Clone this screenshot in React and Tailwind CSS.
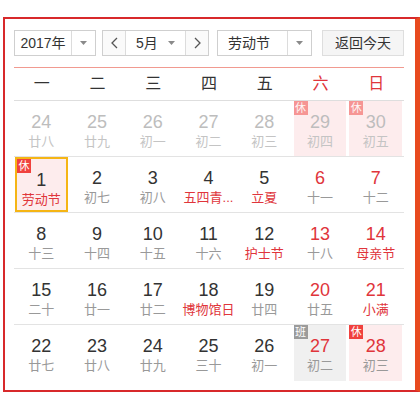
import React from 'react';

const weekdays = [
  { t: '一' }, { t: '二' }, { t: '三' }, { t: '四' }, { t: '五' },
  { t: '六', red: true }, { t: '日', red: true },
];

// n: day, l: lunar, out: not this month, rn: red number, rl: red lunar,
// tag: 休/班 badge, sel: selected
const weeks = [
  [
    { n: 24, l: '廿八', out: true },
    { n: 25, l: '廿九', out: true },
    { n: 26, l: '初一', out: true },
    { n: 27, l: '初二', out: true },
    { n: 28, l: '初三', out: true },
    { n: 29, l: '初四', out: true, tag: '休' },
    { n: 30, l: '初五', out: true, tag: '休' },
  ],
  [
    { n: 1, l: '劳动节', rl: true, tag: '休', sel: true },
    { n: 2, l: '初七' },
    { n: 3, l: '初八' },
    { n: 4, l: '五四青...', rl: true },
    { n: 5, l: '立夏', rl: true },
    { n: 6, l: '十一', rn: true },
    { n: 7, l: '十二', rn: true },
  ],
  [
    { n: 8, l: '十三' },
    { n: 9, l: '十四' },
    { n: 10, l: '十五' },
    { n: 11, l: '十六' },
    { n: 12, l: '护士节', rl: true },
    { n: 13, l: '十八', rn: true },
    { n: 14, l: '母亲节', rn: true, rl: true },
  ],
  [
    { n: 15, l: '二十' },
    { n: 16, l: '廿一' },
    { n: 17, l: '廿二' },
    { n: 18, l: '博物馆日', rl: true },
    { n: 19, l: '廿四' },
    { n: 20, l: '廿五', rn: true },
    { n: 21, l: '小满', rn: true, rl: true },
  ],
  [
    { n: 22, l: '廿七' },
    { n: 23, l: '廿八' },
    { n: 24, l: '廿九' },
    { n: 25, l: '三十' },
    { n: 26, l: '初一' },
    { n: 27, l: '初二', rn: true, tag: '班' },
    { n: 28, l: '初三', rn: true, tag: '休' },
  ],
];

const Caret = () => (
  <svg width="7" height="4" viewBox="0 0 7 4">
    <path d="M0 0 L7 0 L3.5 4 Z" fill="#8a8a8a" />
  </svg>
);

const Chevron = ({ dir }) => (
  <svg width="7" height="12" viewBox="0 0 7 12">
    <polyline
      points={dir === 'left' ? '6,1 1,6 6,11' : '1,1 6,6 1,11'}
      fill="none"
      stroke="#555"
      strokeWidth="1.3"
    />
  </svg>
);

const DayCell = ({ d }) => {
  const bg = d.tag === '班' ? 'bg-[#f0f0f0]' : d.tag === '休' ? 'bg-[#fdeced]' : '';
  const numColor = d.out ? 'text-[#bdbdbd]' : d.rn ? 'text-[#e0353b]' : 'text-[#333]';
  const lunarColor = d.out ? 'text-[#c4c4c4]' : d.rl ? 'text-[#e0353b]' : 'text-[#999]';
  return (
    <div className="h-full pl-[1px] pr-[2px]">
      <div
        className={`relative h-full flex flex-col items-center pt-[10px] ${bg} ${
          d.sel ? 'border-2 border-[#f5b515] pt-[8px]' : ''
        }`}
      >
        {d.tag && (
          <span
            className={`absolute top-0 left-0 w-[14px] h-[14px] flex items-center justify-center text-[11px] leading-none text-white ${
              d.tag === '班' ? 'bg-[#9b9b9b]' : 'bg-[#f0413e]'
            } ${d.out ? 'opacity-50' : ''} ${d.sel ? '-top-[2px] -left-[2px]' : ''}`}
          >
            {d.tag}
          </span>
        )}
        <span className={`text-[18px] leading-[22px] ${numColor}`}>{d.n}</span>
        <span className={`text-[13px] leading-[18px] whitespace-nowrap ${lunarColor}`}>{d.l}</span>
      </div>
    </div>
  );
};

export default function App() {
  return (
    <div className="w-[420px] h-[412px] bg-white font-['Liberation_Sans','Noto_Sans_CJK_SC',sans-serif] pt-[17px] pl-[3px]">
      <div className="w-[417px] h-[375px] border-2 border-[#d8292b] border-r-[5px] border-r-[#e84a1f] pl-[9px] pt-[11px]">
        <div className="w-[390px]">
          {/* controls */}
          <div className="flex items-center h-[26px] text-[14px] text-[#333]">
            <div className="flex h-full w-[82px] border border-[#cfcfcf]">
              <div className="w-[57px] flex items-center justify-center border-r border-[#dcdcdc]">2017年</div>
              <div className="flex-1 flex items-center justify-center"><Caret /></div>
            </div>
            <div className="flex h-full w-[107px] ml-[6px] border border-[#cfcfcf]">
              <div className="w-[23px] flex items-center justify-center border-r border-[#dcdcdc] bg-[#fafafa]"><Chevron dir="left" /></div>
              <div className="w-[60px] flex items-center justify-between pl-[10px] pr-[10px] border-r border-[#dcdcdc]">
                <span>5月</span>
                <Caret />
              </div>
              <div className="flex-1 flex items-center justify-center bg-[#fafafa]"><Chevron dir="right" /></div>
            </div>
            <div className="flex h-full w-[95px] ml-[8px] border border-[#cfcfcf]">
              <div className="w-[70px] flex items-center pl-[10px] border-r border-[#dcdcdc]">劳动节</div>
              <div className="flex-1 flex items-center justify-center"><Caret /></div>
            </div>
            <div className="h-full w-[82px] ml-[10px] border border-[#dedede] bg-[#f5f5f5] flex items-center justify-center">
              返回今天
            </div>
          </div>

          <div className="mt-[11px] h-[1px] bg-[#f19a90]" />

          {/* weekday header */}
          <div className="grid grid-cols-7 h-[33px] border-b border-[#dedede] items-center text-[16px]">
            {weekdays.map((w) => (
              <div key={w.t} className={`text-center ${w.red ? 'text-[#e0353b]' : 'text-[#333]'}`}>{w.t}</div>
            ))}
          </div>

          {/* days */}
          {weeks.map((week, i) => (
            <div
              key={i}
              className={`grid grid-cols-7 h-[56px] ${i < weeks.length - 1 ? 'border-b border-[#e3e3e3]' : ''}`}
            >
              {week.map((d, j) => (
                <DayCell key={j} d={d} />
              ))}
            </div>
          ))}
        </div>
      </div>
    </div>
  );
}
